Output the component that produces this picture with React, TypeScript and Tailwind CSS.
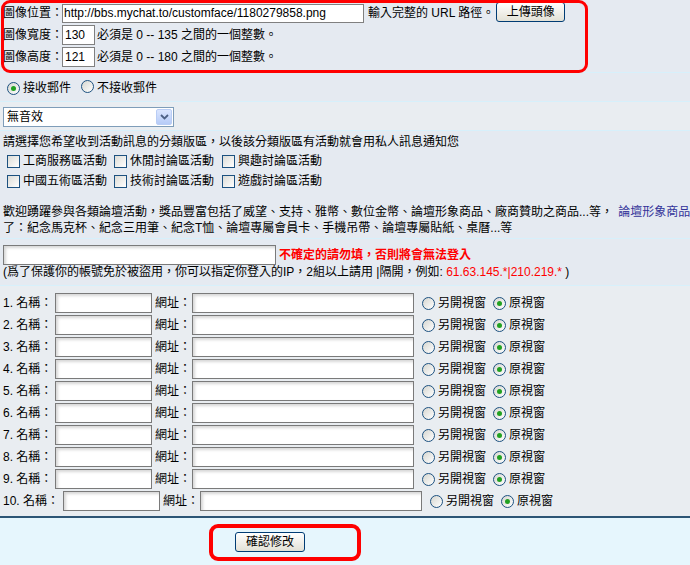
const FONT = "font-['Liberation_Sans','Noto_Sans_CJK_TC',sans-serif]";

function Radio({ checked }: { checked?: boolean }) {
  return (
    <span className="inline-flex w-[13px] h-[13px] shrink-0 items-center justify-center rounded-full border border-[#1c5180] bg-linear-to-br from-[#d6d6d0] to-white">
      {checked && <span className="w-[5px] h-[5px] rounded-full bg-[#21a121]" />}
    </span>
  );
}

function Checkbox() {
  return (
    <span className="inline-block w-[13px] h-[13px] shrink-0 border border-[#1c5180] bg-linear-to-br from-[#dcdcd7] to-white" />
  );
}

function XpButton({ label, className = '' }: { label: string; className?: string }) {
  return (
    <button
      type="button"
      className={`h-[20px] rounded-[3px] border border-[#003c74] bg-linear-to-b from-white to-[#e3e1d6] text-[12px] leading-none text-black ${className}`}
    >
      {label}
    </button>
  );
}

function FieldInput({ className = '', value = '' }: { className?: string; value?: string }) {
  return (
    <input
      type="text"
      readOnly
      value={value}
      className={`h-[20px] shrink-0 border border-[#7a7a7a] bg-white px-[2px] text-[12px] text-black outline-none shadow-[inset_2px_2px_3px_rgba(0,0,0,0.16)] ${className}`}
    />
  );
}

const CATEGORIES = [
  ['工商服務區活動', '休閒討論區活動', '興趣討論區活動'],
  ['中國五術區活動', '技術討論區活動', '遊戲討論區活動'],
];

const Divider = () => <div className="h-px bg-[#d7f0fb]" />;

export default function App() {
  return (
    <div className={`relative w-[690px] h-[565px] overflow-hidden bg-[#e5eaf1] text-[12px] leading-[16px] text-black ${FONT}`}>
      {/* avatar */}
      <div className="h-[72px] pt-[3px] pl-[3px] whitespace-nowrap">
        <div className="flex items-center h-[20px]">
          <span className="shrink-0 mr-[-1px]">圖像位置：</span>
          <input
            type="text"
            readOnly
            value="http://bbs.mychat.to/customface/1180279858.png"
            className="h-[19px] w-[302px] border border-[#808080] bg-white px-[1px] text-[12px] outline-none"
          />
          <span className="ml-[4px]">輸入完整的 URL 路徑。</span>
          <XpButton label="上傳頭像" className="ml-[2px] w-[69px] h-[19px] -mt-[3px]" />
        </div>
        <div className="flex items-center h-[20px] mt-[2px]">
          <span className="shrink-0 mr-[-1px]">圖像寬度：</span>
          <input
            type="text"
            readOnly
            value="130"
            className="h-[20px] w-[33px] border border-[#808080] bg-white px-[2px] text-[12px] outline-none"
          />
          <span className="ml-[2px]">必須是 0 -- 135 之間的一個整數。</span>
        </div>
        <div className="flex items-center h-[20px] mt-[2px]">
          <span className="shrink-0 mr-[-1px]">圖像高度：</span>
          <input
            type="text"
            readOnly
            value="121"
            className="h-[20px] w-[33px] border border-[#808080] bg-white px-[2px] text-[12px] outline-none"
          />
          <span className="ml-[2px]">必須是 0 -- 180 之間的一個整數。</span>
        </div>
      </div>
      <Divider />

      {/* mail */}
      <div className="flex items-center h-[28px] pl-[7px] pt-[2px]">
        <Radio checked />
        <span className="ml-[3px]">接收郵件</span>
        <span className="ml-[10px]"><Radio /></span>
        <span className="ml-[3px]">不接收郵件</span>
      </div>
      <Divider />

      {/* sound */}
      <div className="flex items-center h-[28px] pl-[3px] pt-px bg-[#e9edf1]">
        <div className="flex h-[20px] w-[171px] items-center border border-[#7f9db9] bg-white">
          <span className="flex-1 pl-[3px]">無音效</span>
          <span className="mr-px flex h-[16px] w-[16px] items-center justify-center rounded-[2px] border border-[#b9cdf5] bg-linear-to-b from-[#dbe6ff] to-[#b6cbf7]">
            <svg width="9" height="6" viewBox="0 0 9 6">
              <path d="M1 1 L4.5 4.5 L8 1" fill="none" stroke="#4d6185" strokeWidth="1.8" />
            </svg>
          </span>
        </div>
      </div>
      <Divider />

      {/* categories + events */}
      <div className="h-[107px] pt-[3px] pl-[3px]">
        <div className="h-[16px] whitespace-nowrap">請選擇您希望收到活動訊息的分類版區，以後該分類版區有活動就會用私人訊息通知您</div>
        <div className="mt-px">
          {CATEGORIES.map((row, i) => (
            <div key={i} className="flex h-[20px] items-center">
              {row.map((c, j) => (
                <div key={c} className={`flex items-center ${j === 0 ? 'w-[107px]' : 'w-[108px]'}`}>
                  <span className="ml-[4px] flex"><Checkbox /></span>
                  <span className="ml-[3px]">{c}</span>
                </div>
              ))}
            </div>
          ))}
        </div>
        <div className="mt-[13px] whitespace-nowrap">
          歡迎踴躍參與各類論壇活動，獎品豐富包括了威望、支持、雅幣、數位金幣、論壇形象商品、廠商贊助之商品...等，{' '}
          <span className="ml-[2px] text-[#333399]">論壇形象商品</span>
        </div>
        <div className="whitespace-nowrap">了：紀念馬克杯、紀念三用筆、紀念T恤、論壇專屬會員卡、手機吊帶、論壇專屬貼紙、桌曆...等</div>
      </div>
      <Divider />

      {/* ip */}
      <div className="h-[46px] pt-[6px] pl-[3px]">
        <div className="flex items-center h-[19px]">
          <FieldInput className="w-[273px] h-[19px]" />
          <span className="ml-[3px] font-bold text-[#ff0000]">不確定的請勿填，否則將會無法登入</span>
        </div>
        <div className="h-[16px] whitespace-nowrap">
          (爲了保護你的帳號免於被盜用，你可以指定你登入的IP，2組以上請用 |隔開，例如: <span className="text-[#ff0000]">61.63.145.*|210.219.*</span> )
        </div>
      </div>
      <Divider />

      {/* links */}
      <div className="h-[230px] pt-[7px] pl-[3px] bg-[#e9edf1] flex flex-col gap-[2px]">
        {Array.from({ length: 10 }, (_, i) => i + 1).map((n) => (
          <div key={n} className="flex items-center h-[20px] whitespace-nowrap">
            <span className={n === 10 ? 'w-[60px] shrink-0' : 'w-[52px] shrink-0'}>{n}. 名稱：</span>
            <FieldInput className="w-[97px]" />
            <span className="ml-[3px]">網址：</span>
            <FieldInput className="ml-px w-[222px]" />
            <span className="ml-[8px] flex"><Radio /></span>
            <span className="ml-[3px]">另開視窗</span>
            <span className="ml-[7px] flex"><Radio checked /></span>
            <span className="ml-[3px]">原視窗</span>
          </div>
        ))}
      </div>

      {/* footer */}
      <div className="h-[49px] border-t-2 border-[#2d5575] bg-[#e6f6fd] pt-[14px] pl-[235px]">
        <XpButton label="確認修改" className="w-[70px]" />
      </div>

      {/* annotations */}
      <div className="pointer-events-none absolute left-px top-0 w-[587px] h-[73px] rounded-[9px] border-[3px] border-[#ff0000]" />
      <div className="pointer-events-none absolute left-[209px] top-[524px] w-[152px] h-[37px] rounded-[9px] border-[4px] border-[#ff0000]" />
    </div>
  );
}
